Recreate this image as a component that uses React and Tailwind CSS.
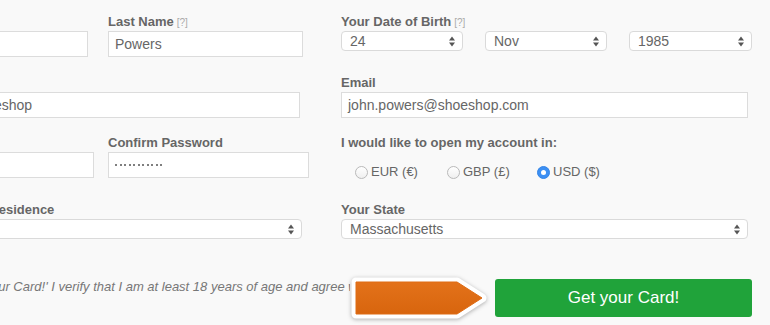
import React from "react";

const font = "font-['Liberation_Sans',Arial,Helvetica,sans-serif]";

function Label({ children, hint }) {
  return (
    <div className="h-[16px] text-[13px] leading-[16px] font-bold text-[#666] whitespace-nowrap">
      {children}
      {hint && <span className="ml-[3px] text-[10px] font-normal text-[#aaa]">[?]</span>}
    </div>
  );
}

function Input({ value, className = "" }) {
  return (
    <div
      className={`mt-px h-[26px] bg-white border border-[#dcdcdc] px-[6px] flex items-center text-[14px] text-[#666] whitespace-nowrap overflow-hidden ${className}`}
    >
      {value}
    </div>
  );
}

function Dots({ count }) {
  return (
    <span className="flex gap-[2.5px]">
      {Array.from({ length: count }).map((_, i) => (
        <span key={i} className="w-[2px] h-[2px] rounded-full bg-[#555]" />
      ))}
    </span>
  );
}

function Arrows() {
  return (
    <svg width="6" height="11" viewBox="0 0 6 11" className="shrink-0">
      <path d="M0 4.5 L3 0.5 L6 4.5 Z" fill="#555" />
      <path d="M0 6.5 L3 10.5 L6 6.5 Z" fill="#555" />
    </svg>
  );
}

function Select({ value, className = "" }) {
  return (
    <div
      className={`h-[20px] bg-white border border-[#dadada] rounded-[4px] pl-[8px] pr-[7px] flex items-center justify-between text-[14px] text-[#666] ${className}`}
    >
      <span>{value}</span>
      <Arrows />
    </div>
  );
}

function Radio({ label, checked }) {
  return (
    <div className="flex items-center gap-[3px] text-[13px] text-[#666]">
      {checked ? (
        <span className="w-[13px] h-[13px] rounded-full bg-[#3c8ff3] border border-[#3585e6] flex items-center justify-center">
          <span className="w-[5px] h-[5px] rounded-full bg-white" />
        </span>
      ) : (
        <span className="w-[13px] h-[13px] rounded-full border border-[#b9b9b9] bg-gradient-to-b from-white to-[#efefef]" />
      )}
      <span>{label}</span>
    </div>
  );
}

export default function App() {
  return (
    <div className={`w-[770px] h-[325px] overflow-hidden bg-[#f9f9f9] ${font}`}>
      <div className="-ml-[80px] pt-[14px] w-[850px]">
        {/* row 1 */}
        <div className="flex">
          <div className="w-[389px] flex gap-[20px]">
            <div className="w-[168px]">
              <Label>First Name</Label>
              <Input value="John" />
            </div>
            <div className="w-[195px]">
              <Label hint>Last Name</Label>
              <Input value="Powers" />
            </div>
          </div>
          <div className="ml-[32px] w-[411px]">
            <Label hint>Your Date of Birth</Label>
            <div className="mt-px flex gap-[22px]">
              <Select value="24" className="w-[122px]" />
              <Select value="Nov" className="w-[122px]" />
              <Select value="1985" className="w-[123px]" />
            </div>
          </div>
        </div>

        {/* row 2 */}
        <div className="flex mt-[18px]">
          <div className="w-[389px]">
            <div className="w-[380px]">
              <Label>Username</Label>
              <Input value="jpower.shoeshop" />
            </div>
          </div>
          <div className="ml-[32px] w-[407px]">
            <Label>Email</Label>
            <Input value="john.powers@shoeshop.com" />
          </div>
        </div>

        {/* row 3 */}
        <div className="flex mt-[17px]">
          <div className="w-[389px] flex gap-[14px]">
            <div className="w-[174px]">
              <Label>Password</Label>
              <Input value={<Dots count={11} />} />
            </div>
            <div className="w-[201px]">
              <Label>Confirm Password</Label>
              <Input value={<Dots count={11} />} />
            </div>
          </div>
          <div className="ml-[32px] w-[407px]">
            <Label>I would like to open my account in:</Label>
            <div className="mt-[11px] h-[20px] flex items-center pl-[14px]">
              <div className="w-[92px]"><Radio label="EUR (€)" /></div>
              <div className="w-[90px]"><Radio label="GBP (£)" /></div>
              <Radio label="USD ($)" checked />
            </div>
          </div>
        </div>

        {/* row 4 */}
        <div className="flex mt-[20px]">
          <div className="w-[389px]">
            <div className="w-[382px]">
              <Label>Country of Residence</Label>
              <Select value="USA" className="mt-px" />
            </div>
          </div>
          <div className="ml-[32px] w-[407px]">
            <Label>Your State</Label>
            <Select value="Massachusetts" className="mt-px" />
          </div>
        </div>

        {/* submit row */}
        <div className="flex items-center mt-[37px]">
          <div className="ml-[63px] w-[367px] self-start mt-[3px] overflow-hidden whitespace-nowrap text-[13px] leading-[16px] italic text-[#777]">
            Your Card!' I verify that I am at least 18 years of age and agree with the terms
          </div>
          <svg width="140" height="44" viewBox="0 0 140 44" className="shrink-0 drop-shadow-[0_1px_2px_rgba(0,0,0,0.3)]">
            <defs>
              <linearGradient id="org" x1="0" y1="0" x2="0" y2="1">
                <stop offset="0" stopColor="#e3721a" />
                <stop offset="1" stopColor="#d8650e" />
              </linearGradient>
            </defs>
            <path d="M6 6 H107 L132 22 L107 38 H6 Z" fill="#fff" stroke="#fff" strokeWidth="9" strokeLinejoin="round" />
            <path d="M6 6 H107 L132 22 L107 38 H6 Z" fill="url(#org)" stroke="#df6c14" strokeWidth="1" strokeLinejoin="round" />
          </svg>
          <button className="ml-[5px] w-[257px] h-[38px] rounded-[3px] bg-[#20a33a] text-white text-[17px] font-light">
            Get your Card!
          </button>
        </div>
      </div>
    </div>
  );
}
